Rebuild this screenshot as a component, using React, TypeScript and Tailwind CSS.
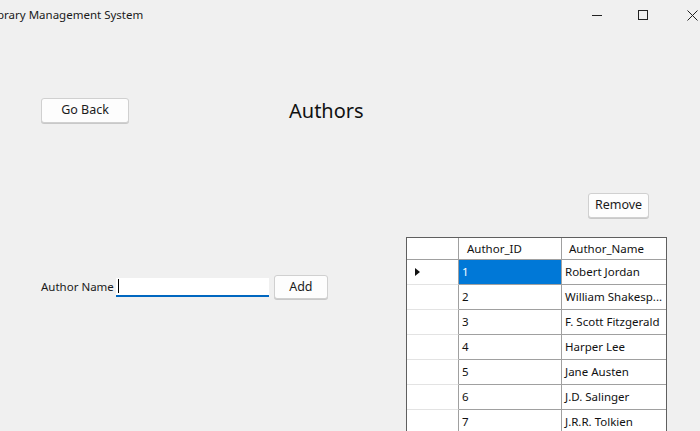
import React from "react";

const rows = [
  ["1", "Robert Jordan"],
  ["2", "William Shakesp..."],
  ["3", "F. Scott Fitzgerald"],
  ["4", "Harper Lee"],
  ["5", "Jane Austen"],
  ["6", "J.D. Salinger"],
  ["7", "J.R.R. Tolkien"],
  ["8", "George Orwell"],
];

function WinButton({ label, className }: { label: string; className: string }) {
  return (
    <button
      className={
        "flex items-center justify-center rounded-[3px] border border-[#d0d0d0] bg-[#fdfdfd] text-[12.5px] text-[#1b1b1b] shadow-[0_1px_0_#c8c8c8] " +
        className
      }
    >
      {label}
    </button>
  );
}

export default function App() {
  return (
    <div
      className="h-[431px] w-[700px] overflow-hidden bg-[#f0f0f0] text-[#111]"
      style={{ fontFamily: '"Noto Sans", "Open Sans", sans-serif' }}
    >
      {/* Title bar */}
      <div className="flex h-[30px] items-center">
        <div className="ml-[-12px] whitespace-nowrap text-[11.5px] text-[#1a1a1a]">
          Library Management System
        </div>
        <div className="ml-auto flex h-full items-center">
          <div className="flex h-full w-[46px] items-center justify-center">
            <div className="h-px w-[10px] bg-[#222]" />
          </div>
          <div className="flex h-full w-[46px] items-center justify-center">
            <div className="h-[10px] w-[10px] border border-[#222]" />
          </div>
          <div className="flex h-full w-[34px] items-center justify-end pr-[2px]">
            <svg width="11" height="11" viewBox="0 0 11 11">
              <path d="M0.5 0.5 L10.5 10.5 M10.5 0.5 L0.5 10.5" stroke="#222" strokeWidth="1" />
            </svg>
          </div>
        </div>
      </div>

      {/* Top row */}
      <div className="mt-[68px] flex items-center">
        <WinButton label="Go Back" className="ml-[41px] h-[25px] w-[88px]" />
        <div className="ml-[160px] text-[20px] leading-none text-[#111]">Authors</div>
      </div>

      {/* Bottom area */}
      <div className="mt-[70px] flex">
        <div className="w-[406px] pt-[82px]">
          <div className="flex items-center">
            <span className="ml-[41px] text-[11.5px] text-[#1a1a1a]">Author Name</span>
            <div className="ml-[2px] flex h-[19px] w-[153px] items-center border-b-2 border-[#0067c0] bg-white">
              <div className="ml-[2px] h-[14px] w-px bg-black" />
            </div>
            <WinButton label="Add" className="ml-[5px] h-[24px] w-[54px]" />
          </div>
        </div>

        <div className="flex flex-col">
          <WinButton label="Remove" className="ml-[182px] h-[25px] w-[61px]" />
          <div className="mt-[19px] w-[261px] border border-[#5f5f5f] bg-white text-[11.5px]">
            <div className="flex h-[22px] border-b border-[#a0a0a0]">
              <div className="w-[52px] border-r border-[#a0a0a0]" />
              <div className="flex w-[103px] items-center border-r border-[#a0a0a0] pl-[8px]">Author_ID</div>
              <div className="flex flex-1 items-center pl-[7px]">Author_Name</div>
            </div>
            {rows.map(([id, name], i) => (
              <div key={id} className="flex h-[25px]">
                <div className="flex w-[52px] items-center border-b border-r border-[#a0a0a0] border-b-[#e3e3e3] pl-[8px]">
                  {i === 0 && (
                    <svg width="5" height="8" viewBox="0 0 5 8">
                      <path d="M0 0 L5 4 L0 8 Z" fill="#111" />
                    </svg>
                  )}
                </div>
                <div
                  className={
                    "flex w-[103px] items-center border-b border-r border-[#a0a0a0] pl-[3px] " +
                    (i === 0 ? "bg-[#0078d7] text-white" : "")
                  }
                >
                  {id}
                </div>
                <div className="flex flex-1 items-center overflow-hidden whitespace-nowrap border-b border-[#a0a0a0] pl-[3px]">
                  {name}
                </div>
              </div>
            ))}
          </div>
        </div>
      </div>
    </div>
  );
}
